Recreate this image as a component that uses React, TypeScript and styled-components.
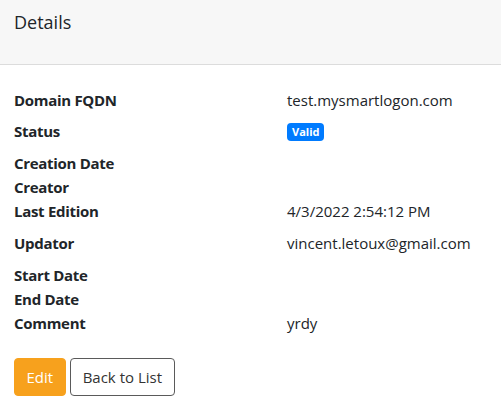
import React from "react";
import styled, { createGlobalStyle } from "styled-components";

const GlobalStyle = createGlobalStyle`
  body {
    margin: 0;
    background: #fff;
    font-family: "Open Sans", "Noto Sans", sans-serif;
    color: #212529;
  }
`;

const Card = styled.div`
  width: 501px;
  min-height: 409px;
  background: #fff;
`;

const CardHeader = styled.div`
  height: 65px;
  box-sizing: border-box;
  background: #f7f7f7;
  border-bottom: 1px solid #dcdcdc;
  padding: 10px 14px;
  font-size: 18px;
  line-height: 24px;
  color: #212529;
`;

const CardBody = styled.div`
  padding: 23px 14px 0;
`;

const DetailList = styled.dl`
  display: grid;
  grid-template-columns: 273px 1fr;
  margin: 0;
  font-size: 15px;
  line-height: 24px;
`;

const Term = styled.dt<{ $gap: number }>`
  font-weight: 700;
  letter-spacing: -0.3px;
  margin-bottom: ${(p) => p.$gap}px;
`;

const Value = styled.dd<{ $gap: number }>`
  margin: 0 0 ${(p) => p.$gap}px;
`;

const Badge = styled.span`
  display: inline-block;
  background: #007bff;
  color: #fff;
  font-size: 11px;
  font-weight: 700;
  line-height: 18px;
  padding: 0 5px;
  border-radius: 4px;
  vertical-align: 1px;
`;

const Actions = styled.div`
  display: flex;
  gap: 4px;
  margin-top: 23px;
`;

const Button = styled.button<{ $variant: "primary" | "outline" }>`
  font-family: inherit;
  font-size: 15px;
  line-height: 24px;
  height: 38px;
  padding: 0 ${(p) => (p.$variant === "primary" ? 11.5 : 12)}px;
  border-radius: 4px;
  cursor: pointer;
  border: 1px solid ${(p) => (p.$variant === "primary" ? "#f7a11d" : "#5a5a5a")};
  background: ${(p) => (p.$variant === "primary" ? "#f7a11d" : "#fff")};
  color: ${(p) => (p.$variant === "primary" ? "#fff" : "#333")};
`;

type Row = { label: string; value?: React.ReactNode; gap: number };

const rows: Row[] = [
  { label: "Domain FQDN", value: "test.mysmartlogon.com", gap: 7 },
  { label: "Status", value: <Badge>Valid</Badge>, gap: 8 },
  { label: "Creation Date", gap: 0 },
  { label: "Creator", gap: 0 },
  { label: "Last Edition", value: "4/3/2022 2:54:12 PM", gap: 8 },
  { label: "Updator", value: "vincent.letoux@gmail.com", gap: 8 },
  { label: "Start Date", gap: 0 },
  { label: "End Date", gap: 0 },
  { label: "Comment", value: "yrdy", gap: 0 },
];

export default function App() {
  return (
    <>
      <GlobalStyle />
      <Card>
        <CardHeader>Details</CardHeader>
        <CardBody>
          <DetailList>
            {rows.map((r) => (
              <React.Fragment key={r.label}>
                <Term $gap={r.gap}>{r.label}</Term>
                <Value $gap={r.gap}>{r.value}</Value>
              </React.Fragment>
            ))}
          </DetailList>
          <Actions>
            <Button $variant="primary">Edit</Button>
            <Button $variant="outline">Back to List</Button>
          </Actions>
        </CardBody>
      </Card>
    </>
  );
}
